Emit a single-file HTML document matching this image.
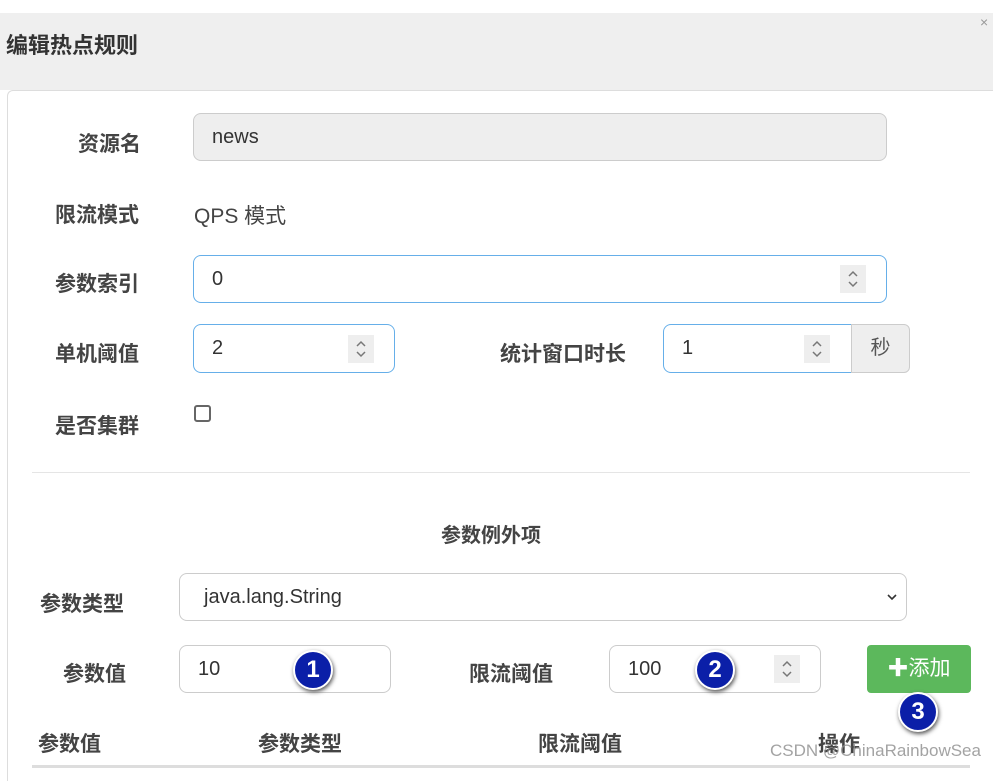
<!DOCTYPE html>
<html><head><meta charset="utf-8"><style>
body{margin:0;width:993px;height:768px;background:#fff;position:relative;overflow:hidden;font-family:"Liberation Sans","Noto Sans CJK SC",sans-serif;color:#333}
.a{position:absolute}
.hdr{left:0;top:13px;width:993px;height:77px;background:#efefef}
.body{left:7px;top:90px;width:986px;height:690px;background:#fff;border-left:1px solid #ddd;border-top:1px solid #ddd;border-radius:6px 0 0 0}
.lbl{font-size:21px;font-weight:bold;color:#444}
.inp{border:1px solid #ccc;border-radius:8px;background:#fff;box-sizing:border-box;font-size:20px;padding-left:18px;display:flex;align-items:center}
.foc{border-color:#66afe9}
.spin{position:absolute;width:26px;height:28px;background:#eee;color:#888}
.num{position:absolute;width:36px;height:36px;border-radius:50%;background:#0b1fa8;border:2px solid #fff;box-shadow:1px 2px 4px #555;color:#fff;font-weight:bold;font-size:24px;text-align:center;line-height:36px}
</style></head><body>
<div class="a hdr"></div>
<div class="a" style="left:6px;top:28px;font-size:22px;font-weight:bold;color:#333">编辑热点规则</div>
<div class="a" style="left:980px;top:14px;color:#999;font-size:14px">×</div>
<div class="a body"></div>
<svg width="0" height="0" style="position:absolute"><defs><symbol id="sp" viewBox="0 0 26 28"><path d="M9 11l4-4 4 4M9 17l4 4 4-4" fill="none" stroke="#777" stroke-width="1.5"/></symbol></defs></svg>

<div class="a lbl" style="left:78px;top:128px">资源名</div>
<div class="a inp" style="left:193px;top:113px;width:694px;height:48px;background:#eee">news</div>
<div class="a lbl" style="left:55px;top:199px">限流模式</div>
<div class="a" style="left:194px;top:200px;font-size:21px;color:#444">QPS 模式</div>
<div class="a lbl" style="left:55px;top:268px">参数索引</div>
<div class="a inp foc" style="left:193px;top:255px;width:694px;height:48px">0<svg class="spin" style="left:646px;top:9px"><use href="#sp"/></svg></div>
<div class="a lbl" style="left:55px;top:338px">单机阈值</div>
<div class="a inp foc" style="left:193px;top:324px;width:202px;height:49px">2<svg class="spin" style="left:154px;top:10px"><use href="#sp"/></svg></div>
<div class="a lbl" style="left:500px;top:338px">统计窗口时长</div>
<div class="a inp foc" style="left:663px;top:324px;width:190px;height:49px;border-radius:8px 0 0 8px">1<svg class="spin" style="left:140px;top:10px"><use href="#sp"/></svg></div>
<div class="a" style="left:851px;top:324px;width:59px;height:49px;background:#eee;border:1px solid #ccc;box-sizing:border-box;border-radius:0 6px 6px 0;text-align:center;line-height:47px;font-size:20px;color:#555">秒</div>
<div class="a lbl" style="left:55px;top:410px">是否集群</div>
<div class="a" style="left:194px;top:405px;width:17px;height:17px;border:2px solid #666;border-radius:3px;box-sizing:border-box"></div>
<div class="a" style="left:32px;top:472px;width:938px;height:1px;background:#e5e5e5"></div>
<div class="a lbl" style="left:441px;top:519px;font-size:20px">参数例外项</div>
<div class="a lbl" style="left:40px;top:588px">参数类型</div>
<div class="a inp" style="left:179px;top:573px;width:728px;height:48px;padding-left:24px">java.lang.String<svg style="position:absolute;right:8px;top:18px" width="12" height="10"><path d="M2 3l4 4 4-4" fill="none" stroke="#333" stroke-width="1.6"/></svg></div>
<div class="a lbl" style="left:63px;top:658px">参数值</div>
<div class="a inp" style="left:179px;top:645px;width:212px;height:48px">10</div>
<div class="a lbl" style="left:469px;top:658px">限流阈值</div>
<div class="a inp" style="left:609px;top:645px;width:212px;height:48px">100<svg class="spin" style="left:164px;top:9px"><use href="#sp"/></svg></div>
<div class="a" style="left:867px;top:645px;width:104px;height:48px;background:#5cb85c;border-radius:4px;color:#fff;font-size:21px;text-align:center;line-height:48px"><b>✚</b>添加</div>
<div class="num" style="left:293px;top:650px">1</div>
<div class="num" style="left:695px;top:650px">2</div>
<div class="num" style="left:898px;top:692px">3</div>
<div class="a lbl" style="left:38px;top:728px">参数值</div>
<div class="a lbl" style="left:258px;top:728px">参数类型</div>
<div class="a lbl" style="left:538px;top:728px">限流阈值</div>
<div class="a lbl" style="left:818px;top:728px">操作</div>
<div class="a" style="left:32px;top:765px;width:938px;height:3px;background:#ddd"></div>
<div class="a" style="left:770px;top:741px;font-size:17px;white-space:nowrap;color:rgba(140,140,140,0.8)">CSDN @ChinaRainbowSea</div>
</body></html>
